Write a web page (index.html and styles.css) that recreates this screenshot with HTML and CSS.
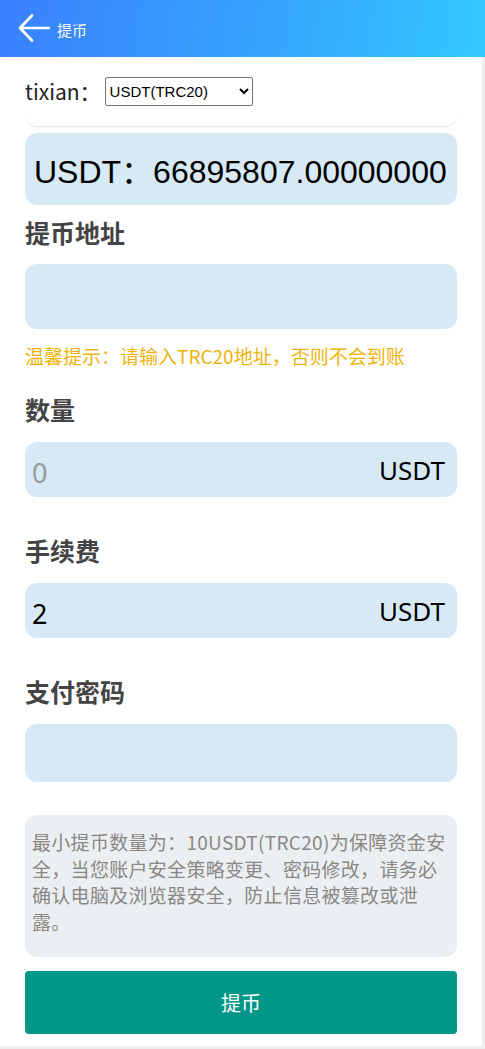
FILE: index.html
```html
<!DOCTYPE html>
<html lang="zh-CN">
<head>
    <meta charset="UTF-8">
    <meta name="viewport" content="width=device-width, initial-scale=1.0">
    <title>提币</title>
    <link rel="stylesheet" href="styles.css">
</head>
<body>
    <header class="topbar">
        <a class="back" href="#">
            <svg width="32" height="30" viewBox="0 0 32 30">
                <path d="M14 1.5 L2 14 L14 26.5 M2 14 H31" fill="none" stroke="#fff" stroke-width="2.6" stroke-linecap="round" stroke-linejoin="round"/>
            </svg>
        </a>
        <span class="topbar-title">提币</span>
    </header>

    <div class="page">
        <div class="coin-card">
            <label class="coin-label">tixian：</label>
            <select class="coin-select">
                <option>USDT(TRC20)</option>
                <option>USDT(ERC20)</option>
            </select>
        </div>

        <div class="balance">USDT：66895807.00000000</div>

        <div class="field-label first">提币地址</div>
        <div class="input-box tall"><input type="text"></div>
        <p class="warn">温馨提示：请输入TRC20地址，否则不会到账</p>

        <div class="field-label after-warn">数量</div>
        <div class="input-box">
            <input type="text" placeholder="0">
            <span class="unit">USDT</span>
        </div>

        <div class="field-label">手续费</div>
        <div class="input-box">
            <input type="text" value="2" readonly>
            <span class="unit">USDT</span>
        </div>

        <div class="field-label">支付密码</div>
        <div class="input-box pwd"><input type="password"></div>

        <div class="notice">最小提币数量为：10USDT(TRC20)为保障资金安全，当您账户安全策略变更、密码修改，请务必确认电脑及浏览器安全，防止信息被篡改或泄露。</div>

        <button class="submit">提币</button>
    </div>
</body>
</html>
```

FILE: styles.css
```css
body {
    margin: 0;
    padding: 0;
    background: #eeeeee;
    font-family: "Noto Sans CJK SC", "Noto Sans", sans-serif;
}

.topbar {
    height: 57px;
    display: flex;
    align-items: center;
    padding-left: 18px;
    background: linear-gradient(100deg, #3a7ffd 0%, #36a8fd 60%, #33c8ff 100%);
    color: #fff;
}

.back {
    display: flex;
    margin-right: 7px;
    margin-top: 1px;
}

.topbar-title {
    font-size: 15px;
    margin-top: 2px;
}

.page {
    width: 482px;
    box-sizing: border-box;
    background: #fff;
    padding: 0 25px 12px;
}

.coin-card {
    display: flex;
    align-items: center;
    padding: 19px 0 20px;
    border-radius: 0 0 12px 12px;
    box-shadow: 0 2px 2px -1px rgba(0, 0, 0, 0.12);
}

.coin-label {
    font-size: 21px;
    color: #222;
    margin-right: 4px;
}

.coin-select {
    width: 148px;
    height: 29px;
    font-family: "Liberation Sans", Arial, sans-serif;
    font-size: 15px;
    color: #000;
    border: 1px solid #767676;
    border-radius: 2px;
    background: #fff;
}

.balance {
    margin-top: 7px;
    height: 72px;
    display: flex;
    align-items: center;
    padding-left: 9px;
    background: #d6e9f5;
    border-radius: 12px;
    font-family: "Liberation Sans", Arial, "Noto Sans CJK SC", sans-serif;
    font-size: 32px;
    color: #000;
    white-space: nowrap;
}

.field-label {
    font-size: 25px;
    font-weight: bold;
    line-height: 32px;
    color: #444;
    margin: 37px 0 17px;
}

.field-label.first {
    margin-top: 11px;
    margin-bottom: 16px;
}

.field-label.after-warn {
    margin-top: 25px;
}

.input-box {
    height: 55px;
    display: flex;
    align-items: center;
    padding: 0 12px 0 7px;
    background: #d6e9f5;
    border-radius: 12px;
}

.input-box.tall {
    height: 65px;
}

.input-box.pwd {
    height: 58px;
}

.input-box input {
    flex: 1;
    min-width: 0;
    border: none;
    outline: none;
    background: transparent;
    font-family: "Noto Sans", sans-serif;
    font-size: 27px;
    color: #000;
    padding: 6px 0 0;
}

.input-box input::placeholder {
    color: #999;
}

.unit {
    font-family: "Noto Sans", sans-serif;
    font-size: 26px;
    color: #000;
}

.warn {
    margin: 15px 0 0;
    font-size: 19px;
    line-height: 24px;
    color: #eeb40c;
}

.notice {
    margin-top: 33px;
    padding: 14px 5px 22px 7px;
    background: #eceff2;
    border-radius: 12px;
    font-size: 19px;
    letter-spacing: 0.3px;
    line-height: 1.4;
    color: #8a8784;
}

.submit {
    display: block;
    width: 100%;
    height: 63px;
    margin-top: 14px;
    border: none;
    border-radius: 4px;
    background: #009688;
    color: #fff;
    font-family: "Noto Sans CJK SC", sans-serif;
    font-size: 20px;
    cursor: pointer;
}
```
